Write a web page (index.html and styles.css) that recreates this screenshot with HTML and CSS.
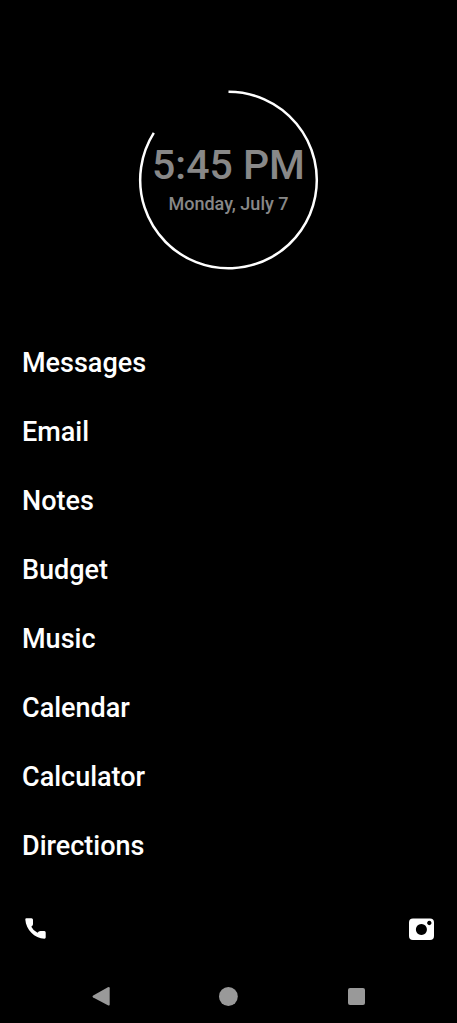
FILE: index.html
```html
<!DOCTYPE html>
<html lang="en">
<head>
<meta charset="utf-8">
<meta name="viewport" content="width=device-width, initial-scale=1">
<title>Home</title>
<link rel="stylesheet" href="styles.css">
</head>
<body>
<div class="home">
  <header class="clock">
    <svg class="ring" viewBox="0 0 179 180" aria-hidden="true"><path d="M89.500 1.700A88.300 88.300 0 1 1 14.800 42.900"/></svg>
    <time class="time">5:45 PM</time>
    <div class="date">Monday, July 7</div>
  </header>
  <nav class="apps" aria-label="Apps">
    <a href="#">Messages</a>
    <a href="#">Email</a>
    <a href="#">Notes</a>
    <a href="#">Budget</a>
    <a href="#">Music</a>
    <a href="#">Calendar</a>
    <a href="#">Calculator</a>
    <a href="#">Directions</a>
  </nav>
  <div class="dock">
    <button class="icon" aria-label="Phone"><svg width="27" height="27" viewBox="0 0 27 27"><path d="M4.300 3.300H9.500Q10.900 3.300 11 4.800V9Q11 10 10.300 10.700L9.300 11.700Q11.300 15.700 15.500 17.800L16.800 16.600Q17.500 16 18.500 16H22.400Q23.700 16.100 23.700 17.500V22.600Q23.700 23.700 22.500 23.700C12.500 23.200 4 15 3.300 4.500Q3.300 3.300 4.300 3.300Z"/></svg></button>
    <button class="icon" aria-label="Camera"><svg width="27" height="27" viewBox="0 0 27 27"><path fill-rule="evenodd" d="M5 3.500H22Q26 3.500 26 7.500V21Q26 25 22 25H5Q1 25 1 21V7.500Q1 3.500 5 3.500ZM13.400 9a5.500 5.500 0 1 0 .01 0ZM21.300 5.800a2.200 2.200 0 1 0 .01 0Z"/></svg></button>
  </div>
  <footer class="system">
    <button class="key" aria-label="Back"><svg width="20" height="20" viewBox="0 0 20 20"><path d="M16.900 1.300Q18.700 .4 18.700 2.300V18.500Q18.700 20.200 16.900 19.300L2.200 11.400Q.8 10.400 2.200 9.400Z"/></svg></button>
    <button class="key" aria-label="Home"><svg width="20" height="20" viewBox="0 0 20 20"><circle cx="10.400" cy="10.500" r="9.400"/></svg></button>
    <button class="key" aria-label="Recent apps"><svg width="20" height="20" viewBox="0 0 20 20"><rect x="2" y="2" width="17" height="17" rx="2"/></svg></button>
  </footer>
</div>
</body>
</html>
```
FILE: styles.css
```css
* { box-sizing: border-box; }
body { margin: 0; background: #000; color: #fff; font-family: Roboto, sans-serif; font-weight: 500; }
button { border: 0; padding: 0; background: none; color: inherit; display: block; }
svg { display: block; fill: currentColor; }
.home { min-height: 100vh; display: flex; flex-direction: column; padding-top: 90px; }
.clock { position: relative; width: 179px; height: 180px; align-self: center; display: flex; flex-direction: column; align-items: center; padding-top: 51px; color: #888; }
.ring { position: absolute; inset: 0; overflow: visible; fill: none; stroke: #fff; stroke-width: 2.5; }
.time { font-size: 41px; line-height: 48px; white-space: nowrap; }
.date { font-size: 18px; line-height: 30px; white-space: nowrap; }
.apps { display: grid; gap: 37px; padding: 77px 22px 24px; justify-items: start; }
.apps a { color: #fff; text-decoration: none; font-size: 27px; line-height: 32px; }
.dock { margin-top: auto; display: flex; justify-content: space-between; padding: 0 22px; }
.system { display: grid; grid-template-columns: repeat(3, 1fr); justify-items: center; padding: 44px 37px 17px; color: #999; }
```
